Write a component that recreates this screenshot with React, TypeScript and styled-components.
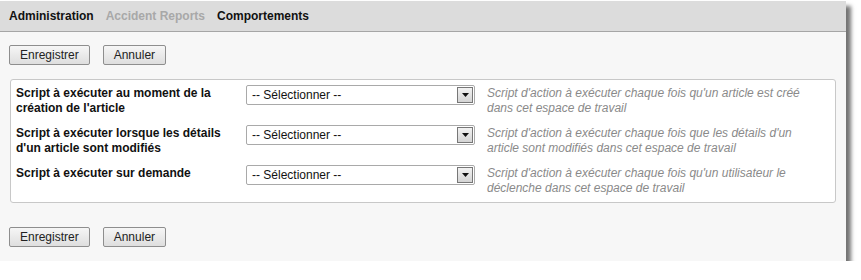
import React from 'react'
import styled, { createGlobalStyle } from 'styled-components'

const GlobalStyle = createGlobalStyle`
    html, body {
        margin: 0;
        padding: 0;
        background: #fff;
    }
    body {
        font-family: "Liberation Sans", Arial, sans-serif;
        font-size: 12px;
        color: #111;
    }
`

const Window = styled.div`
    width: 846px;
    height: 260px;
    margin-top: 1px;
    background: #f7f7f7;
    box-shadow: 5px 5px 4px rgba(0, 0, 0, 0.55);
    display: flex;
    flex-direction: column;
`

const TabBar = styled.div`
    height: 30px;
    background: #dcdcdc;
    border-bottom: 1px solid #a6a6a6;
    display: flex;
    align-items: center;
    gap: 12px;
    padding: 0 9px;
`

const Tab = styled.span<{ $muted?: boolean }>`
    font-weight: bold;
    font-size: 12px;
    color: ${p => (p.$muted ? '#a8a8a8' : '#111')};
`

const Content = styled.div`
    padding: 13px 10px 0 9px;
    display: flex;
    flex-direction: column;
`

const Actions = styled.div<{ $top: number }>`
    display: flex;
    gap: 13px;
    margin-top: ${p => p.$top}px;
`

const Button = styled.button`
    height: 20px;
    padding: 0 10px;
    font-family: "Liberation Sans", Arial, sans-serif;
    font-size: 12px;
    color: #222;
    background: linear-gradient(#f6f6f6, #dedede);
    border: 1px solid #8e8e8e;
    border-radius: 2px;
`

const FormBox = styled.div`
    margin: 14px 0 0 1px;
    background: #fff;
    border: 1px solid #c8c8c8;
    border-radius: 3px;
    padding: 5px 5px 6px 5px;
    display: flex;
    flex-direction: column;
    gap: 9px;
`

const Row = styled.div`
    display: grid;
    grid-template-columns: 218px 229px 320px;
    column-gap: 12px;
    min-height: 30px;
    line-height: 15px;
`

const Label = styled.div`
    font-weight: bold;
    color: #111;
    padding-top: 1px;
`

const Select = styled.div`
    height: 20px;
    box-sizing: border-box;
    border: 1px solid #a9a9a9;
    border-radius: 2px;
    background: #fff;
    display: flex;
    align-items: center;
    justify-content: space-between;
    padding: 0 1px 0 5px;
    color: #111;
`

const ArrowButton = styled.span`
    width: 16px;
    height: 16px;
    box-sizing: border-box;
    border: 1px solid #777;
    background: linear-gradient(#f2f2f2, #d4d4d4);
    display: flex;
    align-items: center;
    justify-content: center;
`

const Hint = styled.div`
    font-style: italic;
    color: #8a8a8a;
    padding-top: 1px;
`

const rows = [
    {
        label: "Script à exécuter au moment de la création de l'article",
        hint: "Script d'action à exécuter chaque fois qu'un article est créé dans cet espace de travail",
    },
    {
        label: "Script à exécuter lorsque les détails d'un article sont modifiés",
        hint: "Script d'action à exécuter chaque fois que les détails d'un article sont modifiés dans cet espace de travail",
    },
    {
        label: 'Script à exécuter sur demande',
        hint: "Script d'action à exécuter chaque fois qu'un utilisateur le déclenche dans cet espace de travail",
    },
]

function ButtonBar(props: { top: number }) {
    return (
        <Actions $top={props.top}>
            <Button>Enregistrer</Button>
            <Button>Annuler</Button>
        </Actions>
    )
}

export default function App() {
    return (
        <>
            <GlobalStyle />
            <Window>
                <TabBar>
                    <Tab>Administration</Tab>
                    <Tab $muted>Accident Reports</Tab>
                    <Tab>Comportements</Tab>
                </TabBar>
                <Content>
                    <ButtonBar top={0} />
                    <FormBox>
                        {rows.map((r, i) => (
                            <Row key={i}>
                                <Label>{r.label}</Label>
                                <Select>
                                    <span>-- Sélectionner --</span>
                                    <ArrowButton>
                                        <svg width="7" height="4" viewBox="0 0 7 4">
                                            <path d="M0 0h7L3.5 4z" fill="#111" />
                                        </svg>
                                    </ArrowButton>
                                </Select>
                                <Hint>{r.hint}</Hint>
                            </Row>
                        ))}
                    </FormBox>
                    <ButtonBar top={24} />
                </Content>
            </Window>
        </>
    )
}
